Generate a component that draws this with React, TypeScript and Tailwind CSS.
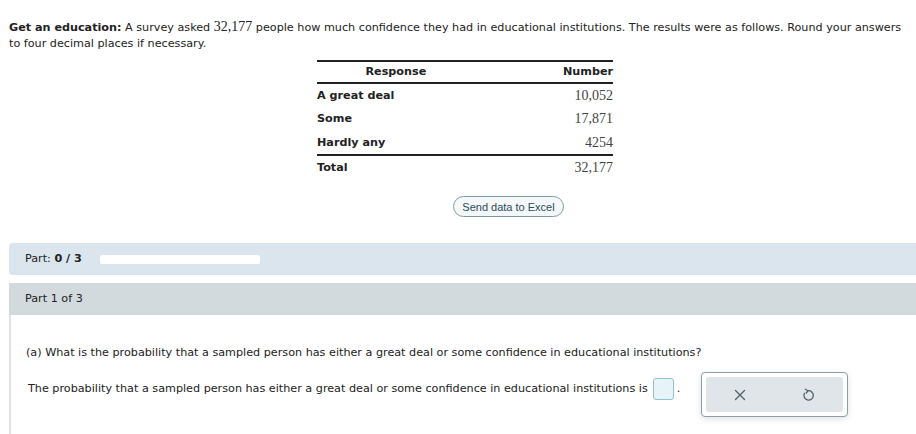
const rows = [
  { label: 'A great deal', value: '10,052' },
  { label: 'Some', value: '17,871' },
  { label: 'Hardly any', value: '4254' },
];

function ResetIcon() {
  return (
    <svg width="15" height="15" viewBox="0 0 16 16" fill="none" stroke="currentColor" strokeWidth={1.4} strokeLinecap="round" strokeLinejoin="round">
      <path d="M7.5 4 A5 5 0 1 1 3.6 6.8" />
      <path d="M4.6 2.4 L7.5 4 L5.6 6.4" />
    </svg>
  );
}

function CloseIcon() {
  return (
    <svg width="14" height="14" viewBox="0 0 14 14" fill="none" stroke="currentColor" strokeWidth={1.4} strokeLinecap="round">
      <path d="M2.5 2.5 L11.5 11.5 M11.5 2.5 L2.5 11.5" />
    </svg>
  );
}

export default function App() {
  return (
    <div className="min-h-screen bg-white text-[11.2px] leading-4 text-[#222] font-['DejaVu_Sans',Verdana,sans-serif]">
      <div className="pl-[9px] pt-[20px]">
        <p>
          <b>Get an education:</b> A survey asked{' '}
          <span className="font-['Liberation_Serif',serif] text-[14px] leading-none">32,177</span> people how much confidence they had in
          educational institutions. The results were as follows. Round your answers
          <br />
          to four decimal places if necessary.
        </p>

        {/* Data table */}
        <div className="flex justify-center mt-[8px]">
          <table className="w-[296px] ml-[5px] border-collapse">
            <thead>
              <tr className="border-t-2 border-b-2 border-[#222]">
                <th className="text-center font-bold h-[22px] p-0 pr-[40px]">Response</th>
                <th className="text-right font-bold h-[22px] p-0">Number</th>
              </tr>
            </thead>
            <tbody>
              {rows.map((r, i) => (
                <tr key={r.label} className={i === rows.length - 1 ? 'border-b-2 border-[#222]' : ''}>
                  <td className="font-bold h-[24px] p-0 align-middle">{r.label}</td>
                  <td className="text-right font-['Liberation_Serif',serif] text-[14px] text-[#444] p-0 align-middle">{r.value}</td>
                </tr>
              ))}
              <tr>
                <td className="font-bold h-[24px] p-0 align-middle">Total</td>
                <td className="text-right font-['Liberation_Serif',serif] text-[14px] text-[#444] p-0 align-middle">32,177</td>
              </tr>
            </tbody>
          </table>
        </div>

        <div className="flex justify-center mt-[17px] pl-[92px]">
          <button className="h-[21px] px-[8px] rounded-full border border-[#7e9aa4] bg-[#f5f8f9] text-[#2c4a58] text-[11px] font-medium font-['Liberation_Sans',Arial,sans-serif]">
            Send data to Excel
          </button>
        </div>
      </div>

      {/* Part progress */}
      <div className="ml-[9px] mt-[26px] h-[32px] bg-[#dae5ee] rounded-l-[4px] flex items-center pl-[16px]">
        <span>
          Part: <b>0 / 3</b>
        </span>
        <div className="ml-[18px] w-[160px] h-[9px] bg-white rounded-[2px]" />
      </div>

      <div className="ml-[9px] mt-[8px] border-l-2 border-[#dde3e6]">
        <div className="h-[32px] bg-[#d2dadd] flex items-center pl-[16px] -ml-[2px]">Part 1 of 3</div>
        <div className="pl-[15px] pt-[30px] pb-[20px]">
          <p>(a) What is the probability that a sampled person has either a great deal or some confidence in educational institutions?</p>
          <div className="flex items-start mt-[13px]">
            <div className="flex items-center mt-[4px] pl-[2px]">
              <span>The probability that a sampled person has either a great deal or some confidence in educational institutions is</span>
              <span className="ml-[5px] w-[21px] h-[22px] rounded-[3px] border border-[#8fc3d3] bg-[#e6f3f8]" />
              <span className="ml-[3px]">.</span>
            </div>
            <div className="ml-[21px] -mt-[2px] w-[147px] h-[45px] rounded-[4px] border border-[#8aa0a8] bg-white p-[4px] shadow-[0_2px_6px_rgba(0,0,0,0.12)]">
              <div className="h-full rounded-[3px] bg-[#dfe5e8] flex items-center justify-around text-[#52656d]">
                <CloseIcon />
                <ResetIcon />
              </div>
            </div>
          </div>
        </div>
      </div>
    </div>
  );
}
